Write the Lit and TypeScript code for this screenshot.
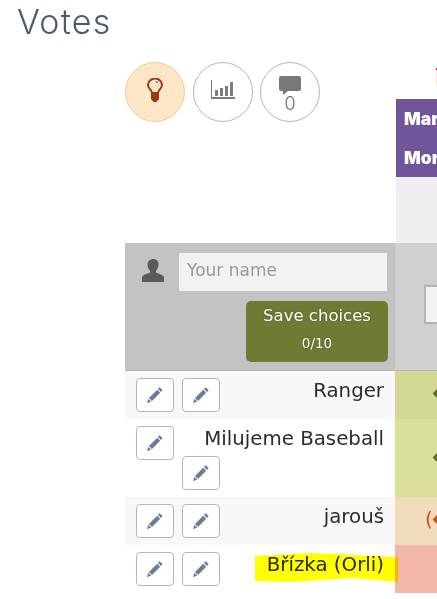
import { LitElement, html, css } from "lit";
import { customElement } from "lit/decorators.js";

const pencil = html`<svg class="pen" viewBox="0 0 16 16" width="16" height="16"><path fill="#6b7b98" d="M12.700 .3l3 3-1.700 1.700-3-3zM10.200 2.800l3 3-8.200 8.200-3-3zM1.300 11.700l3 3-4.300 1.300z"/></svg>`;

const rows = [
  { name: "Ranger", tall: false, zebra: true, cell: "#d3d995", mark: "#5f7025", paren: false },
  { name: "Milujeme Baseball", tall: true, zebra: false, cell: "#d9df96", mark: "#5f7025", paren: false },
  { name: "jarouš", tall: false, zebra: true, cell: "#f0dcbd", mark: "#c8531c", paren: true },
  { name: "Břízka (Orli)", tall: false, zebra: false, cell: "#f4b6aa", mark: "", paren: false },
];

@customElement("app-root")
export class AppRoot extends LitElement {
  static styles = css`
    :host { display: block; width: 437px; height: 599px; overflow: hidden; position: relative; background: #fff; font-family: "DejaVu Sans", sans-serif; color: #2b2b2b; }
    h1 { margin: 0; padding: 2px 0 0 17px; height: 62px; box-sizing: border-box; font: 300 34px/40px Inter, sans-serif; letter-spacing: 1.2px; color: #4a5a70; }
    .top { display: grid; grid-template-columns: 271px 60px; margin-left: 125px; height: 181px; }
    .tools { display: flex; gap: 8px; align-items: flex-start; }
    .circle { width: 60px; height: 60px; box-sizing: border-box; border-radius: 50%; border: 1px solid #a9b7cd; background: #fff; display: flex; flex-direction: column; align-items: center; justify-content: center; }
    .circle.on { background: #fde6c8; border-color: #f6cd90; }
    .circle.last { margin-left: -1px; justify-content: flex-start; padding-top: 13px; }
    .circle.bars { padding-bottom: 6px; }
    .circle.bulb { padding-bottom: 4px; }
    .count { font: 300 18px/18px Inter, sans-serif; color: #707070; }
    .heads { display: flex; flex-direction: column; padding-top: 37px; }
    .mark-red { height: 0; position: relative; }
    .mark-red i { position: absolute; left: 40px; top: -31px; width: 2px; height: 16px; background: #f9e3da; border-top: 2px solid #c9291b; }
    .purple { height: 78px; background: #70559a; color: #fff; font: 900 17.5px/39px Inter, sans-serif; padding-left: 8px; overflow: hidden; white-space: nowrap; }
    .pale { height: 66px; background: #f0eef3; }
    .form { display: grid; grid-template-columns: 270px 1fr; width: 312px; margin-left: 125px; height: 128px; border-bottom: 1px solid #b5b5b5; box-sizing: border-box; }
    .fl { background: #c3c3c3; padding: 10px 7px 0 17px; box-sizing: border-box; }
    .who { display: flex; align-items: flex-start; gap: 14px; }
    .who svg { margin-top: 6px; flex: none; }
    .input { width: 208px; height: 38px; background: #f2f2f2; color: #989898; font-size: 17px; line-height: 34px; padding-left: 8px; box-sizing: border-box; flex: none; }
    .save { margin: 10px 0 0 auto; width: 142px; height: 61px; border-radius: 5px; background: #6f7a32; color: #fff; text-align: center; display: flex; flex-direction: column; align-items: center; padding-top: 5px; box-sizing: border-box; font-size: 16.5px; line-height: 20px; text-shadow: 0 0 2px rgba(0,0,0,.3); }
    .save small { font-size: 13.5px; line-height: 16px; margin-top: 9px; }
    .fr { background: #d0d0d2; display: flex; align-items: center; padding-left: 29px; padding-bottom: 4px; box-sizing: border-box; }
    .check { width: 30px; height: 39px; background: #f3f3f3; border: 2px solid #b4b4b4; box-sizing: border-box; flex: none; }
    .row { display: grid; grid-template-columns: 270px 1fr; width: 312px; margin-left: 125px; height: 48px; }
    .row.tall { height: 78px; }
    .l { display: flex; padding: 7px 11px 0 11px; box-sizing: border-box; }
    .zebra .l { background: #f8f8f8; }
    .btns { display: flex; gap: 8px; flex: none; align-items: flex-start; }
    .tall .btns { width: 84px; flex-wrap: wrap; align-content: flex-start; gap: 0 8px; margin-right: -46px; }
    .tall .btns .b:nth-child(2) { margin: -4px 0 0 46px; }
    .b { width: 38px; height: 34px; border: 1px solid #a9b7cd; border-radius: 4px; box-sizing: border-box; background: #fff; display: flex; align-items: center; justify-content: center; }
    .name { flex: 1; text-align: right; font-size: 19.8px; line-height: 26px; white-space: nowrap; position: relative; z-index: 1; }
    .c { position: relative; display: flex; align-items: center; padding-left: 33px; padding-bottom: 4px; box-sizing: border-box; color: #c8531c; font-size: 20px; }
    .tall .c { padding-bottom: 2px; }
    .diamond { width: 7px; height: 7px; transform: rotate(45deg); flex: none; margin-left: 6px; }
    .paren { position: absolute; left: 30px; top: 9px; line-height: 26px; }
    .highlight { position: absolute; left: 255px; top: 553px; width: 143px; height: 29px; background: #ffff00; mix-blend-mode: multiply; clip-path: polygon(0 10%, 40% 0, 100% 14%, 100% 100%, 68% 86%, 25% 100%, 0 97%); pointer-events: none; z-index: 2; }
  `;

  render() {
    return html`
      <h1>Votes</h1>
      <div class="top">
        <div class="tools">
          <div class="circle on bulb">
            <svg width="16" height="24" viewBox="0 0 16 24"><path fill="none" stroke="#963c12" stroke-width="2" d="M5 15c0-3-4-4.500-4-8a7 6.500 0 0 1 14 0c0 3.500-4 5-4 8z"/><path fill="#963c12" d="M4 15h8v6l-2.500 3h-3L4 21z"/><path fill="none" stroke="#963c12" d="M8.500 3.500l2.500 1.500"/></svg>
          </div>
          <div class="circle bars">
            <svg width="24" height="19" viewBox="0 0 24 19"><path fill="#7c7c7c" d="M0 0h1v17h23v2H0z"/><path fill="#7c7c7c" d="M4 10h3v6H4zM9 8h3v8H9zM14 6h3v10h-3zM19 2h3v14h-3z"/></svg>
          </div>
          <div class="circle last">
            <svg width="22" height="19" viewBox="0 0 22 19"><path fill="#787878" d="M2 0h18a2 2 0 0 1 2 2v11a2 2 0 0 1-2 2H9l-5 4v-4H2a2 2 0 0 1-2-2V2a2 2 0 0 1 2-2z"/></svg>
            <span class="count">0</span>
          </div>
        </div>
        <div class="heads">
          <div class="mark-red"><i></i></div>
          <div class="purple">Mar<br />Mor</div>
          <div class="pale"></div>
        </div>
      </div>
      <div class="form">
        <div class="fl">
          <div class="who">
            <svg width="23" height="23" viewBox="0 0 23 23"><path fill="#5a5a5a" d="M11.500 0c3.300 0 5 2.400 5 5.500 0 2.500-1 4.800-2.500 6v2c2 1 7 2 8 4.500V23H0v-5c1-2.500 6-3.500 8-4.500v-2C6.500 10.300 5.500 8 5.500 5.500 5.500 2.400 8.200 0 11.500 0z"/></svg>
            <div class="input">Your name</div>
          </div>
          <div class="save">Save choices<small>0/10</small></div>
        </div>
        <div class="fr"><div class="check"></div></div>
      </div>
      ${rows.map(
        (r) => html`
          <div class="row ${r.tall ? "tall" : ""} ${r.zebra ? "zebra" : ""}">
            <div class="l">
              <div class="btns">
                <div class="b">${pencil}</div>
                <div class="b">${pencil}</div>
              </div>
              <div class="name">${r.name}</div>
            </div>
            <div class="c" style="background:${r.cell}">
              ${r.paren ? html`<span class="paren">(</span>` : ""}
              ${r.mark ? html`<span class="diamond" style="background:${r.mark}"></span>` : ""}
            </div>
          </div>
        `
      )}
      <div class="highlight"></div>
    `;
  }
}
